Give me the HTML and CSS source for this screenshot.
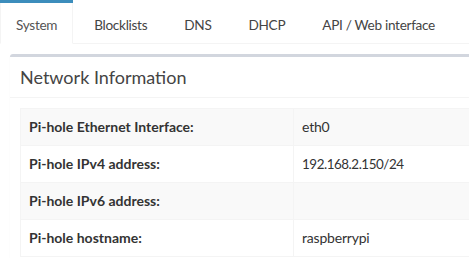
FILE: index.html
```html
<!DOCTYPE html>
<html>
<head>
<meta charset="utf-8">
<link rel="stylesheet" href="styles.css">
</head>
<body>
<div class="tabs-custom">
  <ul class="nav-tabs">
    <li class="active"><a>System</a></li>
    <li><a>Blocklists</a></li>
    <li><a>DNS</a></li>
    <li><a>DHCP</a></li>
    <li><a>API / Web interface</a></li>
  </ul>
  <div class="tab-content">
    <div class="box">
      <div class="box-header">
        <h3 class="box-title">Network Information</h3>
      </div>
      <div class="box-body">
        <table class="info-table">
          <tr class="odd"><th>Pi-hole Ethernet Interface:</th><td>eth0</td></tr>
          <tr><th>Pi-hole IPv4 address:</th><td><span class="num">192.168.2.150/24</span></td></tr>
          <tr class="odd"><th>Pi-hole IPv6 address:</th><td></td></tr>
          <tr><th>Pi-hole hostname:</th><td>raspberrypi</td></tr>
        </table>
      </div>
    </div>
  </div>
</div>
</body>
</html>
```
FILE: styles.css
```css
html, body {
  margin: 0;
  padding: 0;
  overflow: hidden;
  background: #fff;
}
body {
  font-family: Lato, "Liberation Sans", sans-serif;
  font-size: 14px;
  line-height: 20px;
  color: #333;
}
.tabs-custom {
  width: 720px;
  background: #fff;
}
.nav-tabs {
  display: flex;
  margin: 0;
  padding: 0;
  list-style: none;
  border-bottom: 1px solid #f4f4f4;
}
.nav-tabs li {
  margin-right: 5px;
  margin-bottom: -1px;
  border-top: 3px solid transparent;
}
.nav-tabs li a {
  display: block;
  padding: 12px 15px 8px;
  border-left: 1px solid transparent;
  border-right: 1px solid transparent;
  border-bottom: 1px solid transparent;
  color: #444;
  font-size: 13.6px;
  letter-spacing: -0.3px;
}
.nav-tabs li.active {
  border-top-color: #3c8dbc;
}
.nav-tabs li.active a {
  background: #fff;
  color: #555;
  border-left-color: #f4f4f4;
  border-right-color: #f4f4f4;
  border-bottom-color: #fff;
}
.tab-content {
  padding: 10px;
}
.box {
  border-top: 3px solid #d2d6de;
  background: #fff;
  box-shadow: 0 1px 1px rgba(0,0,0,0.1);
  border-radius: 3px;
}
.box-header {
  padding: 10px;
  border-bottom: 1px solid #f4f4f4;
}
.box-title {
  margin: 0;
  font-size: 18px;
  font-weight: normal;
  line-height: 20px;
  color: #444;
}
.box-body {
  padding: 10px;
}
.info-table {
  width: 100%;
  border-collapse: collapse;
  border: 1px solid #f4f4f4;
}
.info-table th,
.info-table td {
  padding: 8px;
  border: 1px solid #f4f4f4;
  text-align: left;
  vertical-align: top;
  height: 20px;
}
.info-table th {
  width: 256px;
  font-weight: bold;
}
.info-table td {
  letter-spacing: -0.2px;
}
.info-table .num {
  font-size: 13.4px;
  letter-spacing: -0.45px;
}
.info-table tr.odd {
  background: #f9f9f9;
}
```
